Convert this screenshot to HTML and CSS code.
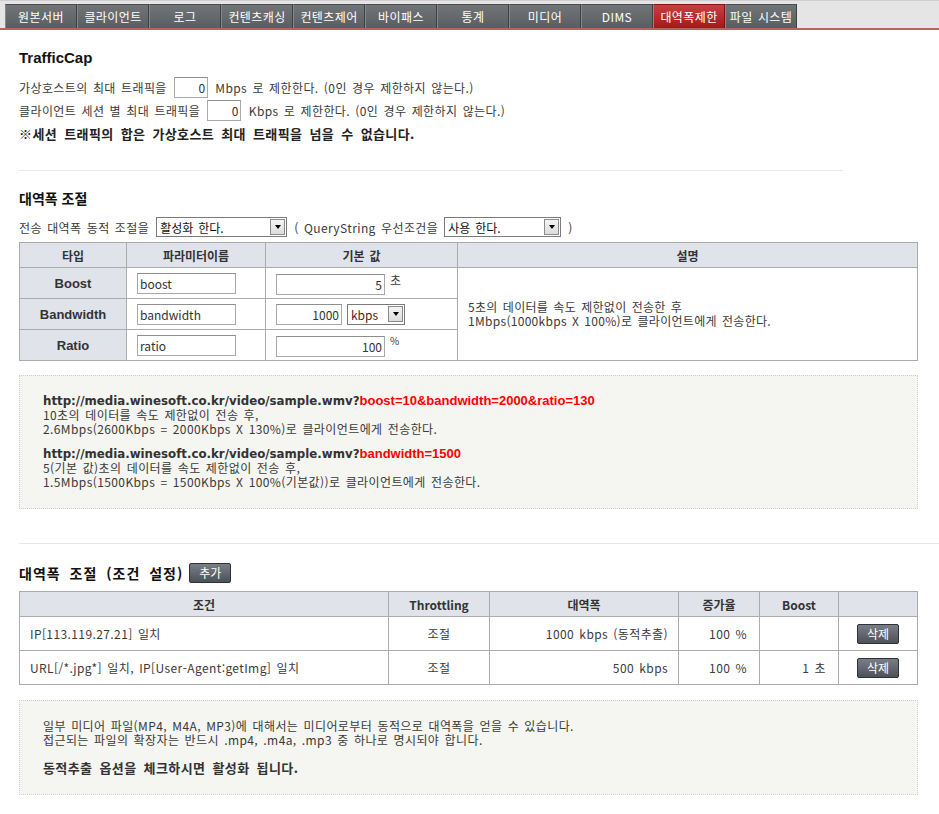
FILE: index.html
```html
<!DOCTYPE html>
<html lang="ko">
<head>
<meta charset="utf-8">
<title>대역폭제한</title>
<link rel="stylesheet" href="styles.css">
</head>
<body>
<div class="nav">
  <a class="tab">원본서버</a>
  <a class="tab">클라이언트</a>
  <a class="tab">로그</a>
  <a class="tab">컨텐츠캐싱</a>
  <a class="tab">컨텐츠제어</a>
  <a class="tab">바이패스</a>
  <a class="tab">통계</a>
  <a class="tab">미디어</a>
  <a class="tab">DIMS</a>
  <a class="tab active">대역폭제한</a>
  <a class="tab">파일 시스템</a>
</div>

<div class="page">
  <h2 class="h-cap">TrafficCap</h2>
  <div class="row first">가상호스트의 최대 트래픽을 <input class="in in-cap" value="0"> Mbps 로 제한한다. (0인 경우 제한하지 않는다.)</div>
  <div class="row">클라이언트 세션 별 최대 트래픽을 <input class="in in-cap" value="0"> Kbps 로 제한한다. (0인 경우 제한하지 않는다.)</div>
  <div class="row bold">※세션 트래픽의 합은 가상호스트 최대 트래픽을 넘을 수 없습니다.</div>

  <div class="hr hr-short"></div>

  <h3 class="h-sec">대역폭 조절</h3>
  <div class="selrow">
    <span>전송 대역폭 동적 조절을</span>
    <span class="sel sel-a"><span class="sel-text">활성화 한다.</span><span class="arr"></span></span>
    <span>( QueryString 우선조건을</span>
    <span class="sel sel-b"><span class="sel-text">사용 한다.</span><span class="arr"></span></span>
    <span>)</span>
  </div>

  <table class="grid t1">
    <colgroup><col class="w107"><col class="w139"><col class="w192"><col></colgroup>
    <tr class="head"><th>타입</th><th>파라미터이름</th><th>기본 값</th><th>설명</th></tr>
    <tr class="r1">
      <th>Boost</th>
      <td class="pl"><input class="in in-name" value="boost"></td>
      <td class="pl"><input class="in in-val" value="5"><span class="unit">초</span></td>
      <td class="desc" rowspan="3">5초의 데이터를 속도 제한없이 전송한 후<br>1Mbps(1000kbps X 100%)로 클라이언트에게 전송한다.</td>
    </tr>
    <tr class="r1">
      <th>Bandwidth</th>
      <td class="pl"><input class="in in-name" value="bandwidth"></td>
      <td class="pl"><input class="in in-bw" value="1000"><span class="sel sel-c"><span class="sel-text">kbps</span><span class="arr"></span></span></td>
    </tr>
    <tr class="r1">
      <th>Ratio</th>
      <td class="pl"><input class="in in-name" value="ratio"></td>
      <td class="pl"><input class="in in-val" value="100"><span class="unit small">%</span></td>
    </tr>
  </table>

  <div class="note note-a">
    <p><b>http://media.winesoft.co.kr/video/sample.wmv?<span class="red">boost=10&amp;bandwidth=2000&amp;ratio=130</span></b><br>10초의 데이터를 속도 제한없이 전송 후,<br>2.6Mbps(2600Kbps = 2000Kbps X 130%)로 클라이언트에게 전송한다.</p>
    <p class="gap"><b>http://media.winesoft.co.kr/video/sample.wmv?<span class="red">bandwidth=1500</span></b><br>5(기본 값)초의 데이터를 속도 제한없이 전송 후,<br>1.5Mbps(1500Kbps = 1500Kbps X 100%(기본값))로 클라이언트에게 전송한다.</p>
  </div>

  <div class="hr hr-full"></div>

  <div class="h-row">
    <h3 class="h-sec2">대역폭 조절 (조건 설정)</h3>
    <a class="btn">추가</a>
  </div>

  <table class="grid t2">
    <colgroup><col class="w369"><col class="w101"><col class="w189"><col class="w81"><col class="w79"><col></colgroup>
    <tr class="head"><th>조건</th><th>Throttling</th><th>대역폭</th><th>증가율</th><th>Boost</th><th></th></tr>
    <tr class="r2">
      <td class="left">IP[113.119.27.21] 일치</td>
      <td class="center">조절</td>
      <td class="right">1000 kbps (동적추출)</td>
      <td class="right r12">100 %</td>
      <td class="right r12"></td>
      <td class="center"><a class="btn">삭제</a></td>
    </tr>
    <tr class="r2">
      <td class="left">URL[/*.jpg*] 일치, IP[User-Agent:getImg] 일치</td>
      <td class="center">조절</td>
      <td class="right">500 kbps</td>
      <td class="right r12">100 %</td>
      <td class="right r12">1 초</td>
      <td class="center"><a class="btn">삭제</a></td>
    </tr>
  </table>

  <div class="note note-b">
    <p>일부 미디어 파일(MP4, M4A, MP3)에 대해서는 미디어로부터 동적으로 대역폭을 얻을 수 있습니다.<br>접근되는 파일의 확장자는 반드시 .mp4, .m4a, .mp3 중 하나로 명시되야 합니다.</p>
    <p class="gap2"><b>동적추출 옵션을 체크하시면 활성화 됩니다.</b></p>
  </div>
</div>
</body>
</html>
```

FILE: styles.css
```css
html, body {
  margin: 0;
  padding: 0;
  background: #fff;
}
body {
  font-family: "Noto Sans CJK KR", "Noto Sans", sans-serif;
  font-size: 12px;
  color: #3a3a3a;
  letter-spacing: 0.4px;
  word-spacing: 1.5px;
}
p { margin: 0; }

/* top navigation */
.nav {
  display: flex;
  height: 24px;
  padding: 3px 0 0 5px;
  background: #e5e5e5;
  border-top: 1px solid #cfcfcf;
  border-bottom: 2px solid #b7625f;
}
.tab {
  width: 72px;
  box-sizing: border-box;
  height: 24px;
  line-height: 23px;
  text-align: center;
  color: #fff;
  font-size: 12px;
  background: linear-gradient(#727577, #5b5e60);
  border-left: 1px solid #85888a;
  border-right: 1px solid #3e4143;
  border-top: 1px solid #4a4d4f;
  white-space: nowrap;
}
.tab.active {
  background: linear-gradient(#c8403e, #a2191a);
  border-left-color: #d56a68;
  border-right-color: #7d1010;
  border-top-color: #8a1515;
}

.page {
  padding: 0 21px 0 19px;
}

.h-cap {
  margin: 18px 0 0;
  font-size: 15px;
  line-height: 20px;
  font-weight: bold;
  color: #111;
  letter-spacing: 0;
  font-family: "Liberation Sans", "Noto Sans CJK KR", sans-serif;
}
.row {
  display: flex;
  align-items: center;
  height: 23px;
  white-space: pre;
}
.row.first { margin-top: 8px; }
.row.bold { font-weight: bold; color: #222; font-size: 13px; word-spacing: 3px; }

.in {
  box-sizing: border-box;
  height: 21px;
  border: 1px solid #a9a9a9;
  border-top-color: #8f8f8f;
  font-family: "Noto Sans CJK KR", sans-serif;
  font-size: 12px;
  letter-spacing: 0;
  color: #333;
  padding: 0 2px;
  margin: 0;
  background: #fff;
  outline: none;
}
.in-cap { width: 34px; text-align: right; margin: 0 2px; }
.in-name { width: 99px; }
.in-val { width: 109px; text-align: right; }
.in-bw { width: 66px; text-align: right; }

.hr {
  height: 0;
  border-top: 1px solid #e8e8e8;
}
.hr-short { width: 824px; margin-top: 25px; }
.hr-full { margin-top: 34px; margin-right: -21px; }

.h-sec {
  margin: 17px 0 0;
  font-size: 14px;
  line-height: 20px;
  font-weight: bold;
  color: #111;
  letter-spacing: 0;
  word-spacing: 0;
}

.selrow {
  margin-top: 9px;
  display: flex;
  align-items: center;
  height: 20px;
  white-space: pre;
}
.sel {
  display: inline-flex;
  align-items: center;
  justify-content: space-between;
  box-sizing: border-box;
  height: 20px;
  border: 1px solid #7b7b7b;
  background: #fff;
  padding-left: 3px;
  color: #111;
  letter-spacing: 0;
}
.sel-a { width: 131px; margin: 0 7px 0 7px; }
.sel-b { width: 117px; margin: 0 7px 0 6px; }
.sel-c { width: 58px; margin-left: 5px; height: 21px; }
.sel-c .sel-text { color: #5a1818; }
.arr {
  width: 15px;
  height: 16px;
  box-sizing: border-box;
  margin-right: 1px;
  border: 1px solid #8a8a8a;
  background: linear-gradient(#f4f4f4, #dcdcdc);
  display: flex;
  align-items: center;
  justify-content: center;
}
.arr::after {
  content: "";
  width: 0;
  height: 0;
  border-left: 3.5px solid transparent;
  border-right: 3.5px solid transparent;
  border-top: 4px solid #000;
}

/* tables */
.grid {
  width: 899px;
  border-collapse: collapse;
  table-layout: fixed;
  margin-top: 5px;
}
.grid th, .grid td {
  border: 1px solid #ababab;
  padding: 0;
  vertical-align: middle;
}
.grid th {
  background: #e1e3eb;
  font-weight: bold;
  color: #333;
  text-align: center;
  letter-spacing: 0;
}
.grid td { background: #fff; }
.w107 { width: 107px; }
.w139 { width: 139px; }
.w192 { width: 192px; }
.w369 { width: 369px; }
.w101 { width: 101px; }
.w189 { width: 189px; }
.w81 { width: 81px; }
.w79 { width: 79px; }

.grid .head th { height: 24px; }
.t1 .r1 th, .t1 .r1 td { height: 30px; }
.t1 .r1 th { font-size: 13px; font-family: "Liberation Sans", "Noto Sans CJK KR", sans-serif; color: #333; }
.pl { padding-left: 10px !important; white-space: nowrap; }
.unit { display: inline-block; vertical-align: 5px; margin-left: 5px; font-size: 12px; }
.unit.small { font-size: 10px; vertical-align: 7px; }
.desc { padding-left: 10px !important; line-height: 14px; letter-spacing: 0.3px; }

.t2 { margin-top: 7px; }
.t2 .r2 td { height: 33px; }
.t2 .left { padding-left: 10px; }
.t2 .center { text-align: center; }
.t2 .right { text-align: right; padding-right: 10px; }
.t2 .right.r12 { padding-right: 12px; }

.btn {
  display: inline-block;
  width: 42px;
  height: 20px;
  box-sizing: border-box;
  line-height: 18px;
  text-align: center;
  color: #fff;
  font-size: 12px;
  letter-spacing: 0;
  border: 1px solid #2e3135;
  border-radius: 2px;
  background: linear-gradient(#7a7e86, #4d5158);
  vertical-align: middle;
}

.note {
  background: #f5f5f1;
  border: 1px dotted #cfcfcf;
  line-height: 14px;
  padding-left: 23px;
}
.note b { color: #333; }
.note-a {
  margin-top: 14px;
  padding-top: 17px;
  padding-bottom: 19px;
}
.note-a b { font-family: "DejaVu Sans", "Noto Sans CJK KR", sans-serif; font-size: 11.8px; letter-spacing: 0; }
.note-a .red { font-family: "Liberation Sans", sans-serif; font-size: 13px; }
.note .gap { margin-top: 10px; }
.note .gap2 { margin-top: 14px; }
.note-b b { font-size: 13px; word-spacing: 3px; }
.note-b {
  margin-top: 15px;
  padding-top: 18px;
  padding-bottom: 19px;
}
.red { color: #ff0000; }

.h-row {
  margin-top: 18px;
  display: flex;
  align-items: center;
  height: 22px;
}
.h-sec2 {
  margin: 0 6px 0 0;
  font-size: 14px;
  line-height: 20px;
  font-weight: bold;
  color: #111;
  letter-spacing: 1px;
  word-spacing: 4px;
}
```
